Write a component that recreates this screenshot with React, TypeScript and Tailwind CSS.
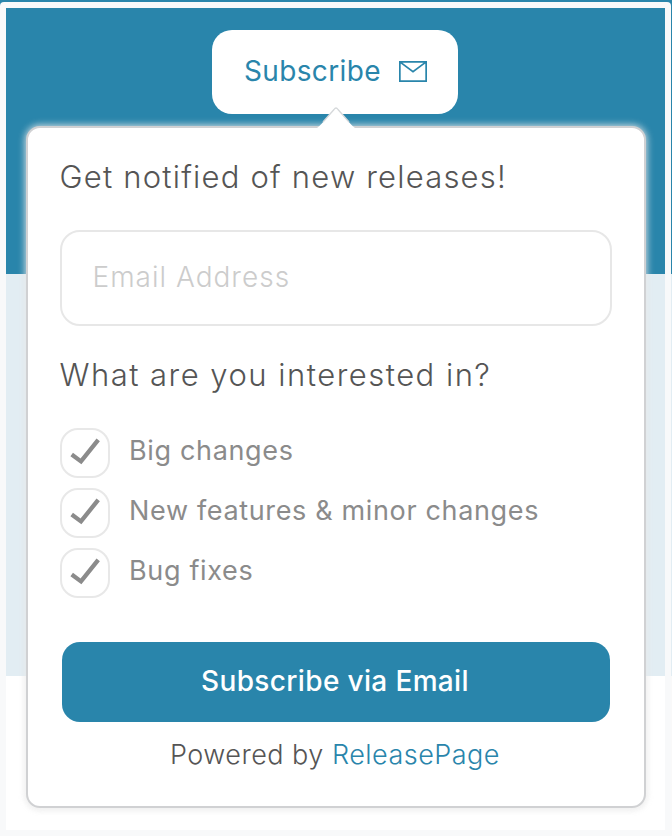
const interests = ['Big changes', 'New features & minor changes', 'Bug fixes'];

function EnvelopeIcon() {
    return (
        <svg className="relative -top-px h-[21px] w-[28px]" viewBox="0 0 28 21" fill="none" stroke="currentColor" strokeWidth="1.7">
            <path d="M.85.85h26.3v19.3H.85zM.85.85 14 10.6 27.15.85" />
        </svg>
    );
}

function Checkbox({ label }: { label: string }) {
    return (
        <label className="flex h-[50px] items-center gap-5">
            <span className="flex size-[50px] shrink-0 items-center justify-center rounded-[18px] border-2 border-[#e8e8e8]">
                <svg className="size-[46px]" viewBox="0 0 46 46" fill="none" stroke="#8b8b8b" strokeWidth="4.3">
                    <path d="M9.7 24.6 19 31.4 36.2 9.8" />
                </svg>
            </span>
            <span className="relative -top-[2px] -ml-[0.5px] whitespace-nowrap text-[27px] tracking-[0.65px] text-[#8b8b8b]">
                {label}
            </span>
        </label>
    );
}

function SubscribeCard() {
    return (
        <div className="relative mt-3 h-[682px] w-[620px] rounded-[14px] border-2 border-[#d0d1d3] bg-white px-8 shadow-[0_0_7px_1px_rgba(238,238,238,0.85),0_2px_6px_rgba(0,0,0,0.06)]">
            <svg className="absolute -top-[23px] left-[286px] h-[25px] w-[44px]" viewBox="0 0 44 25">
                <path d="M1 24.5Q5 22 10 16L20 4.5Q22 1.5 24 4.5L34 16Q39 22 43 24.5V25H1z" fill="#fff" />
                <path d="M9 17 20 4.5Q22 1.5 24 4.5L35 17" fill="none" stroke="#d5d8da" strokeWidth="1.3" />
            </svg>
            <h1 className="mt-[29px] h-10 whitespace-nowrap text-[31px] leading-10 font-light tracking-[1.2px] text-[#555]">
                Get notified of new releases!
            </h1>
            <input
                type="email"
                placeholder="Email Address"
                className="mt-[33px] block h-24 w-[552px] rounded-[20px] border-2 border-[#e7e7e7] px-[31px] pb-[3px] text-[28px] font-light tracking-[1px] outline-none placeholder:text-[#ccc]"
            />
            <h2 className="mt-[29px] h-10 whitespace-nowrap text-[31px] leading-10 font-light tracking-[1.48px] text-[#555]">
                What are you interested in?
            </h2>
            <div className="mt-[33px] flex flex-col gap-[10px]">
                {interests.map((label) => (
                    <Checkbox key={label} label={label} />
                ))}
            </div>
            <button className="mt-11 ml-[2px] block h-20 w-[548px] rounded-[18px] bg-[#2985ab] pr-px pb-[2px] text-[28px] font-medium tracking-[0.35px] text-white">
                Subscribe via Email
            </button>
            <p className="mt-[13px] h-10 w-[551px] whitespace-nowrap text-center text-[27px] leading-10 font-light tracking-[0.48px] text-[#555]">
                Powered by <a className="text-[#2985ab]">ReleasePage</a>
            </p>
        </div>
    );
}

export default function App() {
    return (
        <div className="h-[836px] w-[672px] overflow-hidden bg-[linear-gradient(#2985ab_274px,#e2edf3_274px,#e2edf3_676px,#f9f9f9_676px)] pt-[2px] pr-px font-['Inter',sans-serif]">
            <div className="h-[834px] rounded-t-[4px] bg-[#f8f9fa] p-[6px]">
                <div className="flex h-[822px] w-[659px] flex-col items-center bg-[linear-gradient(#2985ab_266px,#e2edf3_266px,#e2edf3_668px,#fff_668px)] pt-[22px]">
                    <button className="mr-px flex h-[84px] w-[246px] shrink-0 items-center gap-[18px] rounded-[20px] bg-white pl-8 text-[28px] tracking-[0.35px] text-[#2985ab]">
                        <span className="relative -top-px">Subscribe</span>
                        <EnvelopeIcon />
                    </button>
                    <SubscribeCard />
                </div>
            </div>
        </div>
    );
}
